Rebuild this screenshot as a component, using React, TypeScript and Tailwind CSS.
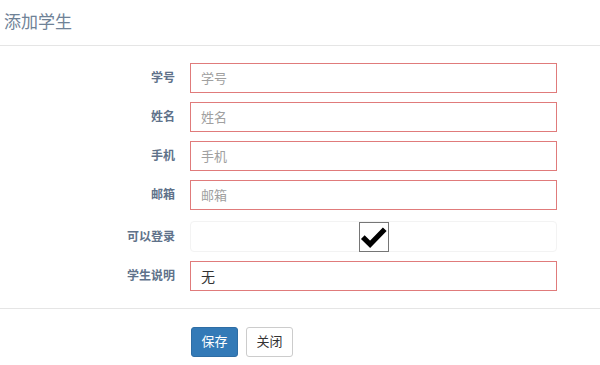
export default function App() {
  const fields = [
    { label: "学号", placeholder: "学号" },
    { label: "姓名", placeholder: "姓名" },
    { label: "手机", placeholder: "手机" },
    { label: "邮箱", placeholder: "邮箱" },
  ];

  return (
    <div
      className="w-[600px] h-[365px] bg-white overflow-hidden"
      style={{ fontFamily: '"Liberation Sans", "Noto Sans CJK SC", sans-serif' }}
    >
      {/* Header */}
      <div className="h-[46px] border-b border-[#e5e5e5] px-[4px] flex items-center">
        <h4 className="text-[17px] text-[#6f8297] leading-none">添加学生</h4>
      </div>

      {/* Body */}
      <div className="pt-[17px] pb-[17px] flex flex-col gap-[9px]">
        {fields.map((f) => (
          <div key={f.label} className="flex items-center">
            <label className="w-[175px] text-right text-[12px] font-bold text-[#60728a]">
              {f.label}
            </label>
            <input
              placeholder={f.placeholder}
              className="ml-[15px] w-[367px] h-[30px] border border-[#e07b7b] px-[10px] text-[13px] text-[#555] placeholder:text-[#a0a0a0] outline-none"
            />
          </div>
        ))}

        <div className="flex items-center mt-[2px]">
          <label className="w-[175px] text-right text-[12px] font-bold text-[#60728a]">
            可以登录
          </label>
          <div className="ml-[15px] w-[367px] h-[31px] border border-[#f3f3f3] rounded-[4px] flex items-center justify-center">
            <div className="w-[30px] h-[30px] border border-[#767676] bg-white flex items-center justify-center">
              <svg viewBox="0 0 24 24" className="w-[27px] h-[27px]">
                <path
                  d="M2.5 12.5 L9 19 L22 5.5"
                  fill="none"
                  stroke="#000"
                  strokeWidth="4.6"
                  strokeLinecap="butt"
                  strokeLinejoin="miter"
                />
              </svg>
            </div>
          </div>
        </div>

        <div className="flex items-center">
          <label className="w-[175px] text-right text-[12px] font-bold text-[#60728a]">
            学生说明
          </label>
          <input
            defaultValue="无"
            className="ml-[15px] w-[367px] h-[30px] border border-[#e07b7b] px-[10px] text-[14px] text-[#333] outline-none"
          />
        </div>
      </div>

      {/* Footer */}
      <div className="border-t border-[#e5e5e5] pt-[18px] pl-[191px] flex gap-[8px]">
        <button className="w-[47px] h-[30px] bg-[#337ab7] border border-[#2e6da4] rounded-[3px] text-white text-[13px]">
          保存
        </button>
        <button className="w-[47px] h-[30px] bg-white border border-[#ccc] rounded-[3px] text-[#333] text-[13px]">
          关闭
        </button>
      </div>
    </div>
  );
}
